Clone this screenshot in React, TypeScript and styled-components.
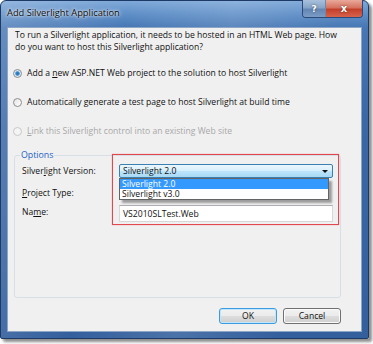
import React from "react";
import styled, { createGlobalStyle, css } from "styled-components";

const Global = createGlobalStyle`
  html, body { margin: 0; padding: 0; background: #ffffff; }
  body { font-family: "Open Sans", "DejaVu Sans", sans-serif; }
  * { box-sizing: border-box; }
`;

const Page = styled.div`
  width: 373px;
  height: 344px;
  padding: 0;
`;

const Window = styled.div`
  width: 369px;
  height: 339px;
  display: flex;
  flex-direction: column;
  padding: 0 6px 6px 6px;
  border: 1px solid #1d3a66;
  border-radius: 6px 6px 2px 2px;
  background:
    linear-gradient(100deg, rgba(255,255,255,0.18) 0%, rgba(255,255,255,0) 30%, rgba(255,255,255,0.12) 55%, rgba(255,255,255,0) 80%),
    linear-gradient(180deg, #7ea8d8 0px, #5d8dc6 14px, #4676b3 27px, #3a68a6 120px, #335f9d 100%);
  box-shadow: 3px 3px 3px rgba(0, 0, 0, 0.45);
`;

const TitleBar = styled.div`
  height: 26px;
  display: flex;
  align-items: flex-start;
  justify-content: space-between;
`;

const Title = styled.div`
  padding-top: 5px;
  font-size: 9.3px;
  color: #0a0a0a;
  text-shadow: 0 0 4px rgba(255,255,255,0.95), 0 0 2px rgba(255,255,255,0.9);
`;

const CaptionButtons = styled.div`
  display: flex;
  margin-top: -1px;
  margin-right: -1px;
  border: 1px solid #2b4a78;
  border-top: none;
  border-radius: 0 0 4px 4px;
  overflow: hidden;
  height: 18px;
`;

const CaptionButton = styled.div<{ $variant: "help" | "close" }>`
  height: 17px;
  display: flex;
  align-items: center;
  justify-content: center;
  font-family: "DejaVu Sans", sans-serif;
  font-weight: bold;
  color: #ffffff;
  text-shadow: 0 0 2px rgba(0,0,0,0.6);
  ${(p) =>
    p.$variant === "help"
      ? css`
          width: 23px;
          font-size: 9px;
          border-right: 1px solid #6d88ad;
          background: linear-gradient(180deg, #a9c0dc 0%, #86a4c8 45%, #6486b3 55%, #7b9cc6 100%);
        `
      : css`
          width: 36px;
          font-size: 10px;
          background: linear-gradient(180deg, #e9a99a 0%, #d57360 45%, #c2402a 55%, #d6634d 100%);
        `}
`;

const Client = styled.div`
  flex: 1;
  background: #f0f0f0;
  border: 1px solid #8ea6c6;
  display: flex;
  flex-direction: column;
  color: #111;
  font-size: 8.6px;
`;

const Intro = styled.p`
  margin: 1px 0 0 7px;
  line-height: 12px;
`;

const RadioList = styled.div`
  margin: 13px 0 0 5px;
  display: flex;
  flex-direction: column;
  gap: 15px;
`;

const RadioRow = styled.label<{ $disabled?: boolean }>`
  height: 14px;
  display: flex;
  align-items: center;
  gap: 5px;
  color: ${(p) => (p.$disabled ? "#a8a8a8" : "#111")};
`;

const RadioDot = styled.span<{ $checked?: boolean; $disabled?: boolean }>`
  width: 9px;
  height: 9px;
  border-radius: 50%;
  flex: none;
  border: 1px solid ${(p) => (p.$disabled ? "#c8c8c8" : "#8d8d8d")};
  background: ${(p) =>
    p.$checked
      ? "radial-gradient(circle, #2a6fb0 0px, #3d8ad0 1.8px, #cfe3f5 2.6px, #f4f4f4 100%)"
      : p.$disabled
      ? "#f4f4f4"
      : "linear-gradient(135deg, #e4e4e4, #ffffff)"};
`;

const GroupBox = styled.fieldset`
  position: relative;
  margin: 13px 0 0 6px;
  width: 327px;
  height: 147px;
  padding: 6px 0 0 7px;
  border: 1px solid #d5dfe5;
  border-radius: 3px;
`;

const Legend = styled.legend`
  padding: 0 1px;
  margin-left: -2px;
  color: #1d62c9;
  font-size: 8.8px;
  line-height: 9px;
`;

const FieldGrid = styled.div`
  display: grid;
  grid-template-columns: 97px 214px;
  grid-template-rows: 14px 19px 17px;
  row-gap: 4px;
  align-items: center;
  margin-top: -2px;
`;

const FieldLabel = styled.span<{ $shift?: number }>`
  justify-self: start;
  transform: translateY(${(p) => p.$shift ?? 0}px);
`;

const Combo = styled.div`
  position: relative;
  height: 14px;
  border: 1px solid #3c7fb1;
  border-radius: 2px;
  background: linear-gradient(180deg, #eaf6fd 0%, #d9f0fc 45%, #bee6fd 50%, #a7d9f5 100%);
  display: flex;
  align-items: center;
  padding-left: 3px;
`;

const ComboArrow = styled.span`
  position: absolute;
  right: 4px;
  top: 5px;
  width: 0;
  height: 0;
  border-left: 3px solid transparent;
  border-right: 3px solid transparent;
  border-top: 3px solid #111;
`;

const DropList = styled.div`
  position: absolute;
  left: -1px;
  top: 13px;
  width: 210px;
  border: 1px solid #646464;
  background: #ffffff;
  box-shadow: 3px 3px 2px rgba(0,0,0,0.35);
  z-index: 2;
`;

const DropItem = styled.div<{ $selected?: boolean }>`
  height: 10px;
  line-height: 10px;
  padding-left: 2px;
  background: ${(p) => (p.$selected ? "#3399ff" : "#ffffff")};
  color: ${(p) => (p.$selected ? "#ffffff" : "#111")};
`;

const TextBox = styled.div`
  height: 17px;
  border: 1px solid #d8d8d8;
  border-top-color: #abadb3;
  background: #ffffff;
  display: flex;
  align-items: center;
  padding-left: 3px;
`;

const Annotation = styled.div`
  position: absolute;
  left: 97px;
  top: -6px;
  width: 227px;
  height: 71px;
  border: 1px solid #e2474e;
  box-shadow: 0 0 1px rgba(226,71,78,0.6);
  pointer-events: none;
  z-index: 3;
`;

const ButtonRow = styled.div`
  display: flex;
  justify-content: flex-end;
  gap: 6px;
  margin: 10px 20px 0 0;
`;

const DlgButton = styled.button<{ $default?: boolean }>`
  width: 58px;
  height: 16px;
  padding: 0;
  font-family: inherit;
  font-size: 8.6px;
  color: #111;
  border-radius: 3px;
  border: 1px solid ${(p) => (p.$default ? "#3c9ce0" : "#707070")};
  box-shadow: inset 0 0 0 1px ${(p) => (p.$default ? "#bfe6fb" : "#fbfbfb")};
  background: linear-gradient(180deg, #f2f2f2 0%, #ebebeb 48%, #dddddd 52%, #cfcfcf 100%);
`;

const U = styled.span`
  text-decoration: underline;
`;

export default function App() {
  return (
    <Page>
      <Global />
      <Window>
        <TitleBar>
          <Title>Add Silverlight Application</Title>
          <CaptionButtons>
            <CaptionButton $variant="help">?</CaptionButton>
            <CaptionButton $variant="close">x</CaptionButton>
          </CaptionButtons>
        </TitleBar>
        <Client>
          <Intro>
            To run a Silverlight application, it needs to be hosted in an HTML Web page. How
            <br />
            do you want to host this Silverlight application?
          </Intro>
          <RadioList>
            <RadioRow>
              <RadioDot $checked />
              <span>
                Add a <U>n</U>ew ASP.NET Web project to the solution to host Silverlight
              </span>
            </RadioRow>
            <RadioRow>
              <RadioDot />
              <span>
                Automatically <U>g</U>enerate a test page to host Silverlight at build time
              </span>
            </RadioRow>
            <RadioRow $disabled>
              <RadioDot $disabled />
              <span>
                <U>L</U>ink this Silverlight control into an existing Web site
              </span>
            </RadioRow>
          </RadioList>
          <GroupBox>
            <Legend>Options</Legend>
            <FieldGrid>
              <FieldLabel>
                Silver<U>l</U>ight Version:
              </FieldLabel>
              <Combo>
                Silverlight 2.0
                <ComboArrow />
                <DropList>
                  <DropItem $selected>Silverlight 2.0</DropItem>
                  <DropItem>Silverlight v3.0</DropItem>
                </DropList>
              </Combo>
              <FieldLabel $shift={1}>
                <U>P</U>roject Type:
              </FieldLabel>
              <span />
              <FieldLabel $shift={-2}>
                Na<U>m</U>e:
              </FieldLabel>
              <TextBox>VS2010SLTest.Web</TextBox>
            </FieldGrid>
            <Annotation />
          </GroupBox>
          <ButtonRow>
            <DlgButton $default>OK</DlgButton>
            <DlgButton>Cancel</DlgButton>
          </ButtonRow>
        </Client>
      </Window>
    </Page>
  );
}
